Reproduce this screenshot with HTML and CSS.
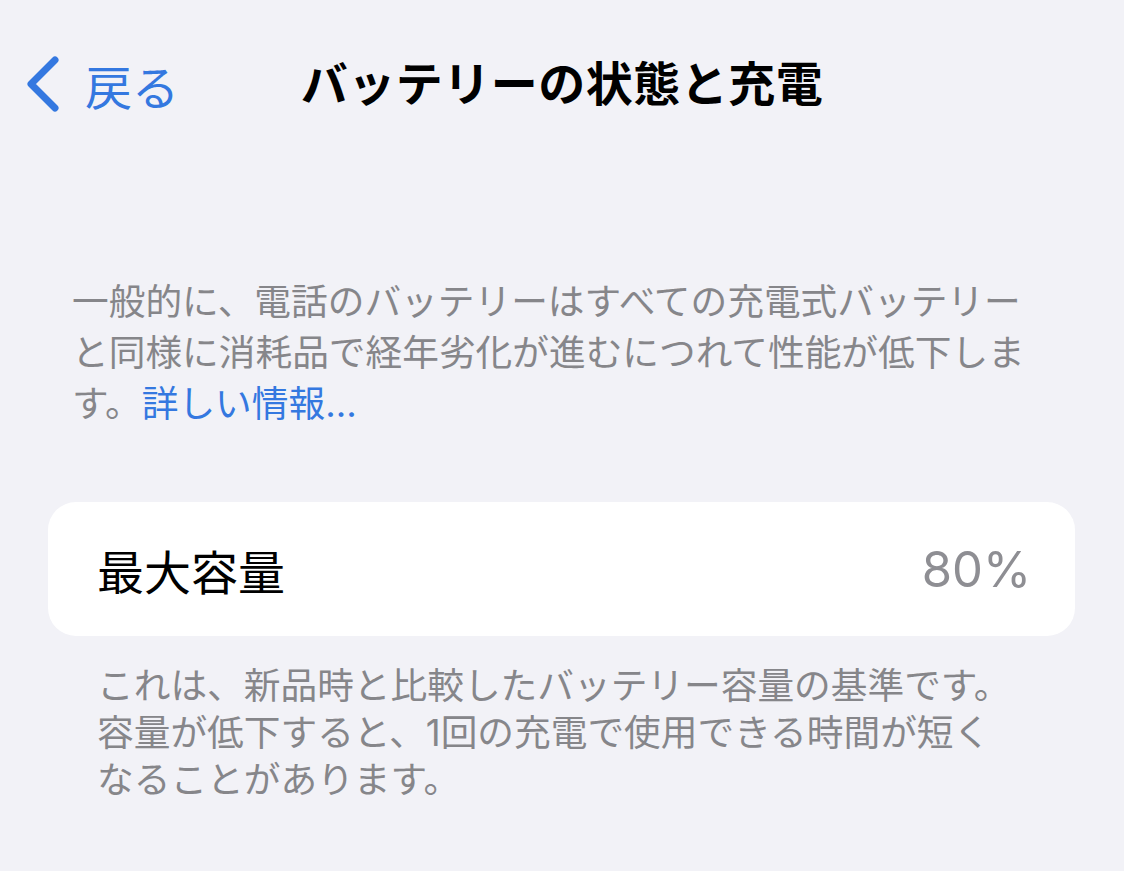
FILE: index.html
```html
<!DOCTYPE html>
<html lang="ja">
<head>
    <meta charset="UTF-8">
    <meta name="viewport" content="width=device-width, initial-scale=1.0">
    <title>バッテリーの状態と充電</title>
    <link rel="stylesheet" href="styles.css">
</head>
<body>

    <header class="nav">
        <a class="back" href="#">
            <svg class="chevron" width="34" height="56" viewBox="0 0 34 56">
                <polyline points="30,4 6,28 30,52" fill="none" stroke="currentColor" stroke-width="7" stroke-linecap="round" stroke-linejoin="round"/>
            </svg>
            <span>戻る</span>
        </a>
        <h1 class="title">バッテリーの状態と充電</h1>
        <span></span>
    </header>

    <main>
        <p class="intro">一般的に、電話のバッテリーはすべての充電式バッテリーと同様に消耗品で経年劣化が進むにつれて性能が低下します。<a class="link" href="#">詳しい情報...</a></p>

        <div class="group">
            <div class="row">
                <span class="label">最大容量</span>
                <span class="value">80%</span>
            </div>
        </div>

        <p class="note">これは、新品時と比較したバッテリー容量の基準です。容量が低下すると、1回の充電で使用できる時間が短くなることがあります。</p>
    </main>

</body>
</html>
```

FILE: styles.css
```css
body {
    margin: 0;
    background-color: #f2f2f7;
    color: #000;
    font-family: "Inter", "Noto Sans CJK JP", sans-serif;
}

.nav {
    display: grid;
    grid-template-columns: 1fr auto 1fr;
    align-items: center;
    height: 72px;
    padding-top: 48px;
}

.back {
    display: flex;
    align-items: center;
    gap: 26px;
    padding-left: 25px;
    color: #3478e0;
    text-decoration: none;
    font-size: 47px;
}

.chevron {
    display: block;
}

.title {
    margin: 0;
    font-size: 47px;
    font-weight: 700;
    letter-spacing: 0.5px;
    line-height: 72px;
}

.intro {
    margin: 156px 0 0 72px;
    width: 975px;
    font-size: 36.7px;
    line-height: 51px;
    color: #86868a;
}

.link {
    color: #3478e0;
    text-decoration: none;
}

.group {
    margin: 73px 49px 0 48px;
    background: white;
    border-radius: 28px;
}

.row {
    display: flex;
    justify-content: space-between;
    align-items: center;
    height: 134px;
    padding: 0 44px 0 49px;
    font-size: 47px;
}

.value {
    color: #8e8e93;
    font-size: 49px;
}

.note {
    margin: 26px 0 0 97px;
    width: 926px;
    font-size: 36.7px;
    line-height: 47px;
    color: #86868a;
}
```
